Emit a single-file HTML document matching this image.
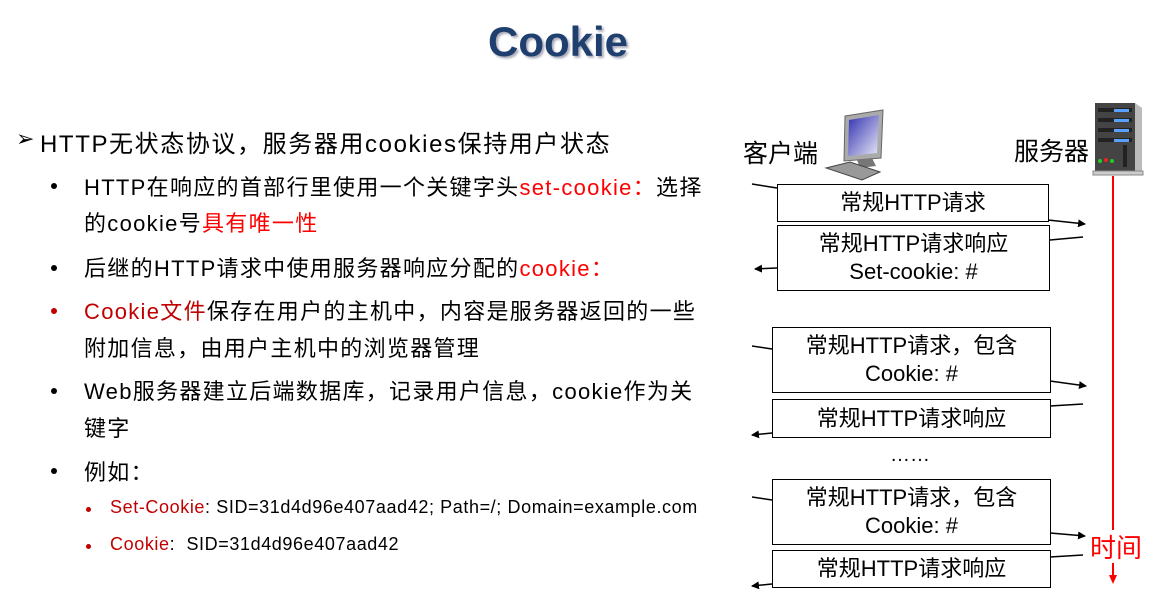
<!DOCTYPE html>
<html><head><meta charset="utf-8"><style>
body{margin:0;width:1175px;height:608px;background:#fff;position:relative;overflow:hidden;font-family:"Liberation Sans","Noto Sans CJK SC",sans-serif;color:#000}
.a{position:absolute;white-space:nowrap}
.t{left:0;width:1116px;text-align:center;top:18px;font-size:42px;font-weight:bold;color:#1f3f6e;text-shadow:2px 2px 2px #aab}
.l1{font-size:24px;letter-spacing:1.6px}
.l2{font-size:22px;letter-spacing:1.3px}
.l3{font-size:18px;letter-spacing:0.6px}
.d{position:absolute;width:6px;height:6px;border-radius:50%;background:#000}
.dd{background:#c00000}
.r{color:#f00}.dr{color:#c00000}
.box{position:absolute;border:1.5px solid #000;box-sizing:border-box;text-align:center;font-size:22px;line-height:28px;display:flex;flex-direction:column;justify-content:center}
</style></head><body>
<div class="a t">Cookie</div>
<div class="a" style="left:16px;top:126px;font-size:22px">➢</div>
<div class="a l1" style="left:40px;top:124px">HTTP无状态协议，服务器用cookies保持用户状态</div>
<div class="d" style="left:51px;top:183px"></div>
<div class="a l2" style="left:84px;top:170px">HTTP在响应的首部行里使用一个关键字头<span class="r">set-cookie：</span>选择</div>
<div class="a l2" style="left:84px;top:206px">的cookie号<span class="r">具有唯一性</span></div>
<div class="d" style="left:51px;top:265px"></div>
<div class="a l2" style="left:84px;top:251px">后继的HTTP请求中使用服务器响应分配的<span class="r">cookie：</span></div>
<div class="d dd" style="left:51px;top:308px"></div>
<div class="a l2" style="left:84px;top:294px"><span class="dr">Cookie文件</span>保存在用户的主机中，内容是服务器返回的一些</div>
<div class="a l2" style="left:84px;top:331px">附加信息，由用户主机中的浏览器管理</div>
<div class="d" style="left:51px;top:388px"></div>
<div class="a l2" style="left:84px;top:374px">Web服务器建立后端数据库，记录用户信息，cookie作为关</div>
<div class="a l2" style="left:84px;top:411px">键字</div>
<div class="d" style="left:51px;top:468px"></div>
<div class="a l2" style="left:84px;top:455px">例如：</div>
<div class="d dd" style="left:86px;top:507px;width:5px;height:5px"></div>
<div class="a l3" style="left:110px;top:497px"><span class="dr">Set-Cookie</span>: SID=31d4d96e407aad42; Path=/; Domain=example.com</div>
<div class="d dd" style="left:86px;top:544px;width:5px;height:5px"></div>
<div class="a l3" style="left:110px;top:534px"><span class="dr">Cookie</span>:&nbsp; SID=31d4d96e407aad42</div>

<div class="a" style="left:743px;top:134px;font-size:25px">客户端</div>
<div class="a" style="left:1014px;top:132px;font-size:25px">服务器</div>
<svg class="a" style="left:0;top:0" width="1175" height="608">
<defs><marker id="ar" markerWidth="8" markerHeight="8" refX="7" refY="4" orient="auto" markerUnits="userSpaceOnUse"><path d="M0,0L8,4L0,8z" fill="#000"/></marker>
<linearGradient id="sc" x1="0" y1="0" x2="1" y2="1"><stop offset="0" stop-color="#3030b0"/><stop offset="1" stop-color="#e8e8f8"/></linearGradient></defs>
<!-- computer -->
<polygon points="845,116 883,110 881,158 844,161" fill="#aaa" stroke="#666"/>
<polygon points="849,120 879,115 877,153 848,156" fill="url(#sc)"/>
<polygon points="857,160 872,158 876,166 860,168" fill="#777"/>
<polygon points="826,168 850,162 880,172 862,180" fill="#999" stroke="#444"/>
<!-- server -->
<rect x="1095" y="103" width="40" height="68" fill="#444"/>
<polygon points="1135,103 1142,108 1142,173 1135,171" fill="#bbb"/>
<rect x="1093" y="171" width="50" height="4" fill="#ccc" stroke="#888"/>
<rect x="1098" y="108" width="34" height="4" fill="#222"/><rect x="1114" y="109" width="15" height="3" fill="#5aa0ff"/>
<rect x="1098" y="118" width="34" height="4" fill="#222"/><rect x="1114" y="119" width="15" height="3" fill="#5aa0ff"/>
<rect x="1098" y="128" width="34" height="4" fill="#222"/><rect x="1114" y="129" width="15" height="3" fill="#5aa0ff"/>
<rect x="1098" y="138" width="34" height="4" fill="#222"/><rect x="1114" y="139" width="15" height="3" fill="#5aa0ff"/>
<circle cx="1100" cy="161" r="2" fill="#2c2"/><circle cx="1106" cy="160" r="2" fill="#e22"/><circle cx="1112" cy="161" r="2" fill="#2c2"/>
<rect x="1123" y="145" width="4" height="22" fill="#222"/>
<!-- time line -->
<line x1="1113" y1="176" x2="1113" y2="530" stroke="#f00" stroke-width="2"/>
<line x1="1113" y1="563" x2="1113" y2="576" stroke="#f00" stroke-width="2"/>
<polygon points="1109,575 1117,575 1113,584" fill="#f00"/>
<g stroke="#000" stroke-width="1.5" fill="none">
<line x1="752" y1="184" x2="777" y2="188"/>
<line x1="1048" y1="220" x2="1085" y2="224" marker-end="url(#ar)"/>
<line x1="1050" y1="240" x2="1083" y2="237"/>
<line x1="777" y1="268" x2="755" y2="269" marker-end="url(#ar)"/>
<line x1="752" y1="346" x2="772" y2="349"/>
<line x1="1050" y1="381" x2="1086" y2="386" marker-end="url(#ar)"/>
<line x1="1050" y1="406" x2="1083" y2="404"/>
<line x1="772" y1="433" x2="752" y2="435" marker-end="url(#ar)"/>
<line x1="752" y1="497" x2="772" y2="500"/>
<line x1="1050" y1="533" x2="1085" y2="536" marker-end="url(#ar)"/>
<line x1="1050" y1="557" x2="1083" y2="555"/>
<line x1="772" y1="584" x2="752" y2="586" marker-end="url(#ar)"/>
</g>
</svg>
<div class="box" style="left:777px;top:184px;width:272px;height:38px">常规HTTP请求</div>
<div class="box" style="left:777px;top:225px;width:273px;height:66px"><div>常规HTTP请求响应</div><div>Set-cookie: #</div></div>
<div class="box" style="left:772px;top:327px;width:279px;height:66px"><div>常规HTTP请求，包含</div><div>Cookie: #</div></div>
<div class="box" style="left:772px;top:399px;width:279px;height:39px">常规HTTP请求响应</div>
<div class="a" style="left:890px;top:444px;font-size:20px">……</div>
<div class="box" style="left:772px;top:479px;width:279px;height:66px"><div>常规HTTP请求，包含</div><div>Cookie: #</div></div>
<div class="box" style="left:772px;top:550px;width:279px;height:38px">常规HTTP请求响应</div>
<div class="a" style="left:1090px;top:528px;font-size:26px;color:#f00">时间</div>
</body></html>
